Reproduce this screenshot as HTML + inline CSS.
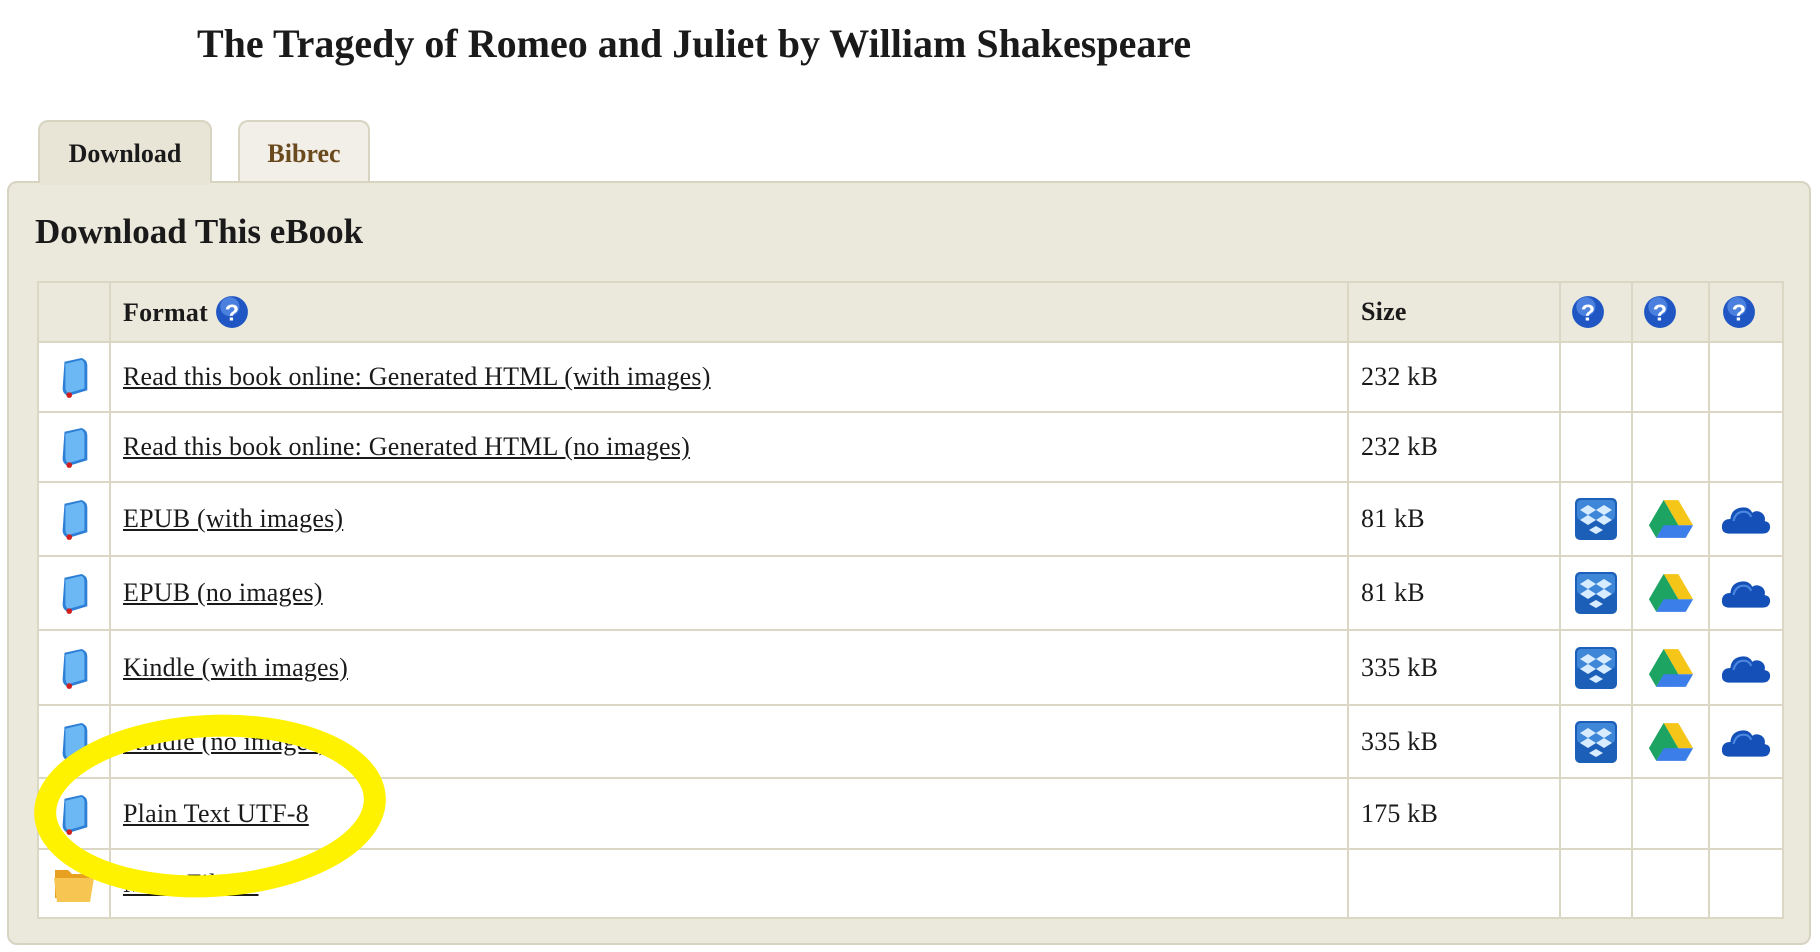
<!DOCTYPE html>
<html><head><meta charset="utf-8"><style>
body{margin:0;width:1820px;height:952px;background:#fff;font-family:"Liberation Serif",serif;position:relative;overflow:hidden;color:#1a1a1a}
.abs{position:absolute}
h1{position:absolute;left:197px;top:20px;margin:0;font-size:40px;font-weight:bold;line-height:48px;white-space:nowrap}
.tab{position:absolute;top:120px;height:64px;background:#ebe8dc;border:2px solid #d8d4c2;border-bottom:none;border-radius:10px 10px 0 0;font-weight:bold;font-size:26px;text-align:center;line-height:64px;box-sizing:border-box}
.panel{position:absolute;left:7px;top:181px;width:1804px;height:764px;background:#ebe8dc;border:2px solid #d8d4c2;border-radius:10px;box-sizing:border-box}
h2{position:absolute;left:35px;top:212px;margin:0;font-size:35px;line-height:40px;font-weight:bold}
table{position:absolute;left:37px;top:281px;width:1747px;border-collapse:collapse;font-size:26px;letter-spacing:0.2px}
td{border:2px solid #dbd7c5;padding:0;background:#fff;vertical-align:middle}
tr.h td{background:#ebe8dc;font-weight:bold}
td.t{padding-left:12px}
a{color:#1a1a1a;text-decoration:underline}
svg{display:block;margin:auto}
</style></head><body>
<h1>The Tragedy of Romeo and Juliet by William Shakespeare</h1>
<div class="tab" style="left:38px;width:174px;background:#e8e4d6">Download</div>
<div class="tab" style="left:238px;width:132px;background:#f1efe8;color:#6b4a1e">Bibrec</div>
<div class="panel"></div>
<div class="abs" style="left:40px;top:179px;width:170px;height:6px;background:#e8e4d6"></div>
<h2>Download This eBook</h2>
<svg width="0" height="0" style="position:absolute"><defs>
<symbol id="q" viewBox="0 0 32 32"><circle cx="16" cy="16" r="15" fill="#1f56c4"/><circle cx="14" cy="11" r="9" fill="#5e93ea" opacity=".7"/><text x="16" y="24" font-size="22" font-weight="bold" fill="#fff" text-anchor="middle" font-family="Liberation Sans">?</text></symbol>
<symbol id="bk" viewBox="0 0 40 44"><path d="M10 6 L28 2 Q34 4 34 10 L34 36 L14 42 Q8 40 8 34 Z" fill="#2e7fd6"/><path d="M11 8 L28 4 Q31 6 31 10 L31 34 L14 39 Q11 37 11 33 Z" fill="#6cb8f5"/><circle cx="15" cy="41" r="3" fill="#d02020"/></symbol>
<symbol id="db" viewBox="0 0 44 44"><rect x="1" y="1" width="42" height="42" rx="5" fill="#1c5fb8"/><rect x="3" y="3" width="38" height="20" rx="4" fill="#3d86d8"/><g fill="#d8ecff"><path d="M14 8 l8 5 -8 5 -8 -5z"/><path d="M30 8 l8 5 -8 5 -8 -5z"/><path d="M14 18 l8 5 -8 5 -8 -5z"/><path d="M30 18 l8 5 -8 5 -8 -5z"/><path d="M22 29 l7 4 -7 4 -7 -4z"/></g></symbol>
<symbol id="gd" viewBox="0 0 44 40"><path d="M15 2 H29 L43 26 H29 Z" fill="#f5c518"/><path d="M15 2 L29 26 L22 38 L1 26 Z" fill="#1da462"/><path d="M1 26 L15 2 L22 14 L8 38 Z" fill="#1da462"/><path d="M8 38 L15 26 H43 L36 38 Z" fill="#3b7de9"/></symbol>
<symbol id="od" viewBox="0 0 48 32"><path d="M8 30 Q0 30 1 22 Q2 16 9 16 Q10 6 20 5 Q27 4 30 10 Q34 7 39 10 Q43 13 42 18 Q48 19 47 25 Q46 30 40 30 Z" fill="#1450b8"/><path d="M12 18 Q14 9 22 9 Q27 9 29 14" fill="none" stroke="#4c88e0" stroke-width="2"/></symbol>
<symbol id="fd" viewBox="0 0 44 40"><path d="M3 6 H16 L20 10 H38 V34 H3 Z" fill="#e8a020"/><path d="M2 14 H42 L38 38 H5 Z" fill="#f7c652"/></symbol>
</defs></svg>
<table>
<col style="width:72px"><col style="width:1238px"><col style="width:212px"><col style="width:72px"><col style="width:77px"><col>
<tr class="h" style="height:60px"><td></td><td class="t">Format <svg width="34" height="34" style="display:inline-block;vertical-align:-8px;margin:0"><use href="#q"/></svg></td><td class="t">Size</td><td><svg width="34" height="34" style="margin-left:10px"><use href="#q"/></svg></td><td><svg width="34" height="34" style="margin-left:10px"><use href="#q"/></svg></td><td><svg width="34" height="34" style="margin-left:12px"><use href="#q"/></svg></td></tr>
<tr style="height:70px"><td><svg width="38" height="44"><use href="#bk"/></svg></td><td class="t"><a>Read this book online: Generated HTML (with images)</a></td><td class="t">232 kB</td><td></td><td></td><td></td></tr>
<tr style="height:70px"><td><svg width="38" height="44"><use href="#bk"/></svg></td><td class="t"><a>Read this book online: Generated HTML (no images)</a></td><td class="t">232 kB</td><td></td><td></td><td></td></tr>
<tr style="height:74px"><td><svg width="38" height="44"><use href="#bk"/></svg></td><td class="t"><a>EPUB (with images)</a></td><td class="t">81 kB</td><td><svg width="44" height="44"><use href="#db"/></svg></td><td><svg width="48" height="42"><use href="#gd"/></svg></td><td><svg width="50" height="34"><use href="#od"/></svg></td></tr>
<tr style="height:74px"><td><svg width="38" height="44"><use href="#bk"/></svg></td><td class="t"><a>EPUB (no images)</a></td><td class="t">81 kB</td><td><svg width="44" height="44"><use href="#db"/></svg></td><td><svg width="48" height="42"><use href="#gd"/></svg></td><td><svg width="50" height="34"><use href="#od"/></svg></td></tr>
<tr style="height:75px"><td><svg width="38" height="44"><use href="#bk"/></svg></td><td class="t"><a>Kindle (with images)</a></td><td class="t">335 kB</td><td><svg width="44" height="44"><use href="#db"/></svg></td><td><svg width="48" height="42"><use href="#gd"/></svg></td><td><svg width="50" height="34"><use href="#od"/></svg></td></tr>
<tr style="height:73px"><td><svg width="38" height="44"><use href="#bk"/></svg></td><td class="t"><a>Kindle (no images)</a></td><td class="t">335 kB</td><td><svg width="44" height="44"><use href="#db"/></svg></td><td><svg width="48" height="42"><use href="#gd"/></svg></td><td><svg width="50" height="34"><use href="#od"/></svg></td></tr>
<tr style="height:71px"><td><svg width="38" height="44"><use href="#bk"/></svg></td><td class="t"><a>Plain Text UTF-8</a></td><td class="t">175 kB</td><td></td><td></td><td></td></tr>
<tr style="height:69px"><td><svg width="44" height="40"><use href="#fd"/></svg></td><td class="t"><a>More Files...</a></td><td></td><td></td><td></td><td></td></tr>
</table>
<svg class="abs" style="left:0;top:0" width="1820" height="952"><ellipse cx="210" cy="806" rx="165" ry="80" fill="none" stroke="#fff200" stroke-width="22" transform="rotate(-3 210 806)"/></svg>
</body></html>
